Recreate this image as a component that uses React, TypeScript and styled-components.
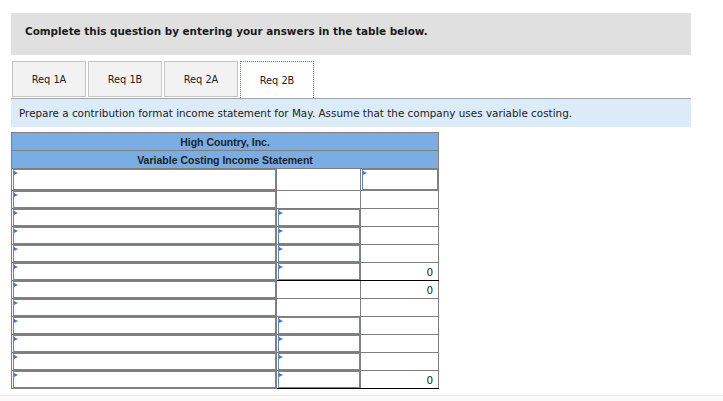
import styled, { createGlobalStyle } from "styled-components";

const GlobalStyle = createGlobalStyle`
  html, body {
    margin: 0;
    padding: 0;
    background: #ffffff;
  }
  body {
    font-family: "DejaVu Sans", Verdana, sans-serif;
    color: #222222;
  }
`;

const Page = styled.div`
  padding: 13px 32px 0 11px;
  width: 680px;
`;

const Banner = styled.div`
  background-color: #e0e0e0;
  height: 42px;
  display: flex;
  align-items: center;
  padding-left: 14px;
  font-size: 10.4px;
  font-weight: bold;
  color: #1a1a1a;
  padding-bottom: 6px;
  box-sizing: border-box;
`;

const Tabs = styled.div`
  display: flex;
  gap: 2px;
  margin-top: 6px;
  padding-left: 1px;
  border-bottom: 1px solid #a6a6a6;
  height: 37px;
`;

const Tab = styled.div<{ $active?: boolean }>`
  width: 74px;
  height: ${(p) => (p.$active ? "37px" : "36px")};
  margin-bottom: ${(p) => (p.$active ? "-1px" : "0")};
  display: flex;
  align-items: center;
  justify-content: center;
  font-size: 9.8px;
  color: #222;
  box-sizing: border-box;
  background-color: ${(p) => (p.$active ? "#ffffff" : "#f2f2f2")};
  border: ${(p) => (p.$active ? "1px dotted #4a7fc7" : "1px solid #c4c4c4")};
  border-bottom: ${(p) => (p.$active ? "none" : "1px solid #c4c4c4")};
`;

const Instruction = styled.div`
  background-color: #dbebf8;
  height: 28px;
  display: flex;
  align-items: center;
  padding-left: 8px;
  font-size: 10.4px;
  color: #222;
`;

const Sheet = styled.table`
  margin-top: 5px;
  width: 427px;
  border-collapse: collapse;
  table-layout: fixed;
  border: 1px solid #7f7f7f;
`;

const HeadCell = styled.th`
  background-color: #79ade4;
  border: 1px solid #7f7f7f;
  height: 17px;
  padding: 0;
  font-family: "Liberation Sans", Arial, sans-serif;
  font-size: 10.5px;
  font-weight: bold;
  color: #1e1e1e;
  text-align: center;
`;

const Cell = styled.td<{ $tall?: boolean; $top?: boolean; $bottom?: boolean }>`
  border: 1px solid #7f7f7f;
  border-top-color: ${(p) => (p.$top ? "#000" : "#7f7f7f")};
  border-bottom-color: ${(p) => (p.$bottom ? "#000" : "#7f7f7f")};
  height: ${(p) => (p.$tall ? "21px" : "17px")};
  padding: 0;
  font-size: 10.4px;
  text-align: right;
  vertical-align: middle;
  color: #222;
`;

const Value = styled.div`
  padding-right: 5px;
`;

const Field = styled.div<{ $tall?: boolean }>`
  position: relative;
  box-sizing: border-box;
  height: ${(p) => (p.$tall ? "21px" : "17px")};
  margin-left: 1px;
  border: 1px solid #5d88c6;
  background: #ffffff;

  &::before {
    content: "";
    position: absolute;
    top: 1px;
    left: 0;
    border-top: 2.5px solid transparent;
    border-bottom: 2.5px solid transparent;
    border-left: 4px solid #3d7ad6;
  }
`;

type Row = {
  mid: "input" | "blank";
  right: "input" | "blank" | "zero";
  top?: boolean;
  bottom?: boolean;
};

const rows: Row[] = [
  { mid: "blank", right: "input" },
  { mid: "blank", right: "blank" },
  { mid: "input", right: "blank" },
  { mid: "input", right: "blank" },
  { mid: "input", right: "blank" },
  { mid: "input", right: "zero", bottom: true },
  { mid: "blank", right: "zero", top: true },
  { mid: "blank", right: "blank" },
  { mid: "input", right: "blank" },
  { mid: "input", right: "blank" },
  { mid: "input", right: "blank" },
  { mid: "input", right: "zero", bottom: true },
];

const PageEnd = styled.div`
  margin-top: 6px;
  border-top: 1px solid #ececec;
  height: 6px;
  background: #fafafa;
`;

function App() {
  const tabs = ["Req 1A", "Req 1B", "Req 2A", "Req 2B"];
  return (
    <>
      <GlobalStyle />
      <Page>
        <Banner>Complete this question by entering your answers in the table below.</Banner>
        <Tabs>
          {tabs.map((t) => (
            <Tab key={t} $active={t === "Req 2B"}>
              {t}
            </Tab>
          ))}
        </Tabs>
        <Instruction>
          Prepare a contribution format income statement for May. Assume that the company uses variable costing.
        </Instruction>
        <Sheet>
          <colgroup>
            <col style={{ width: 265 }} />
            <col style={{ width: 84 }} />
            <col style={{ width: 78 }} />
          </colgroup>
          <thead>
            <tr>
              <HeadCell colSpan={3}>High Country, Inc.</HeadCell>
            </tr>
            <tr>
              <HeadCell colSpan={3}>Variable Costing Income Statement</HeadCell>
            </tr>
          </thead>
          <tbody>
            {rows.map((r, i) => {
              const tall = i === 0;
              return (
                <tr key={i}>
                  <Cell $tall={tall}>
                    <Field $tall={tall} />
                  </Cell>
                  <Cell $tall={tall} $top={r.top} $bottom={r.bottom}>
                    {r.mid === "input" && <Field $tall={tall} />}
                  </Cell>
                  <Cell $tall={tall} $top={r.top} $bottom={r.bottom}>
                    {r.right === "input" && <Field $tall={tall} />}
                    {r.right === "zero" && <Value>0</Value>}
                  </Cell>
                </tr>
              );
            })}
          </tbody>
        </Sheet>
      </Page>
      <PageEnd />
    </>
  );
}

export default App;
